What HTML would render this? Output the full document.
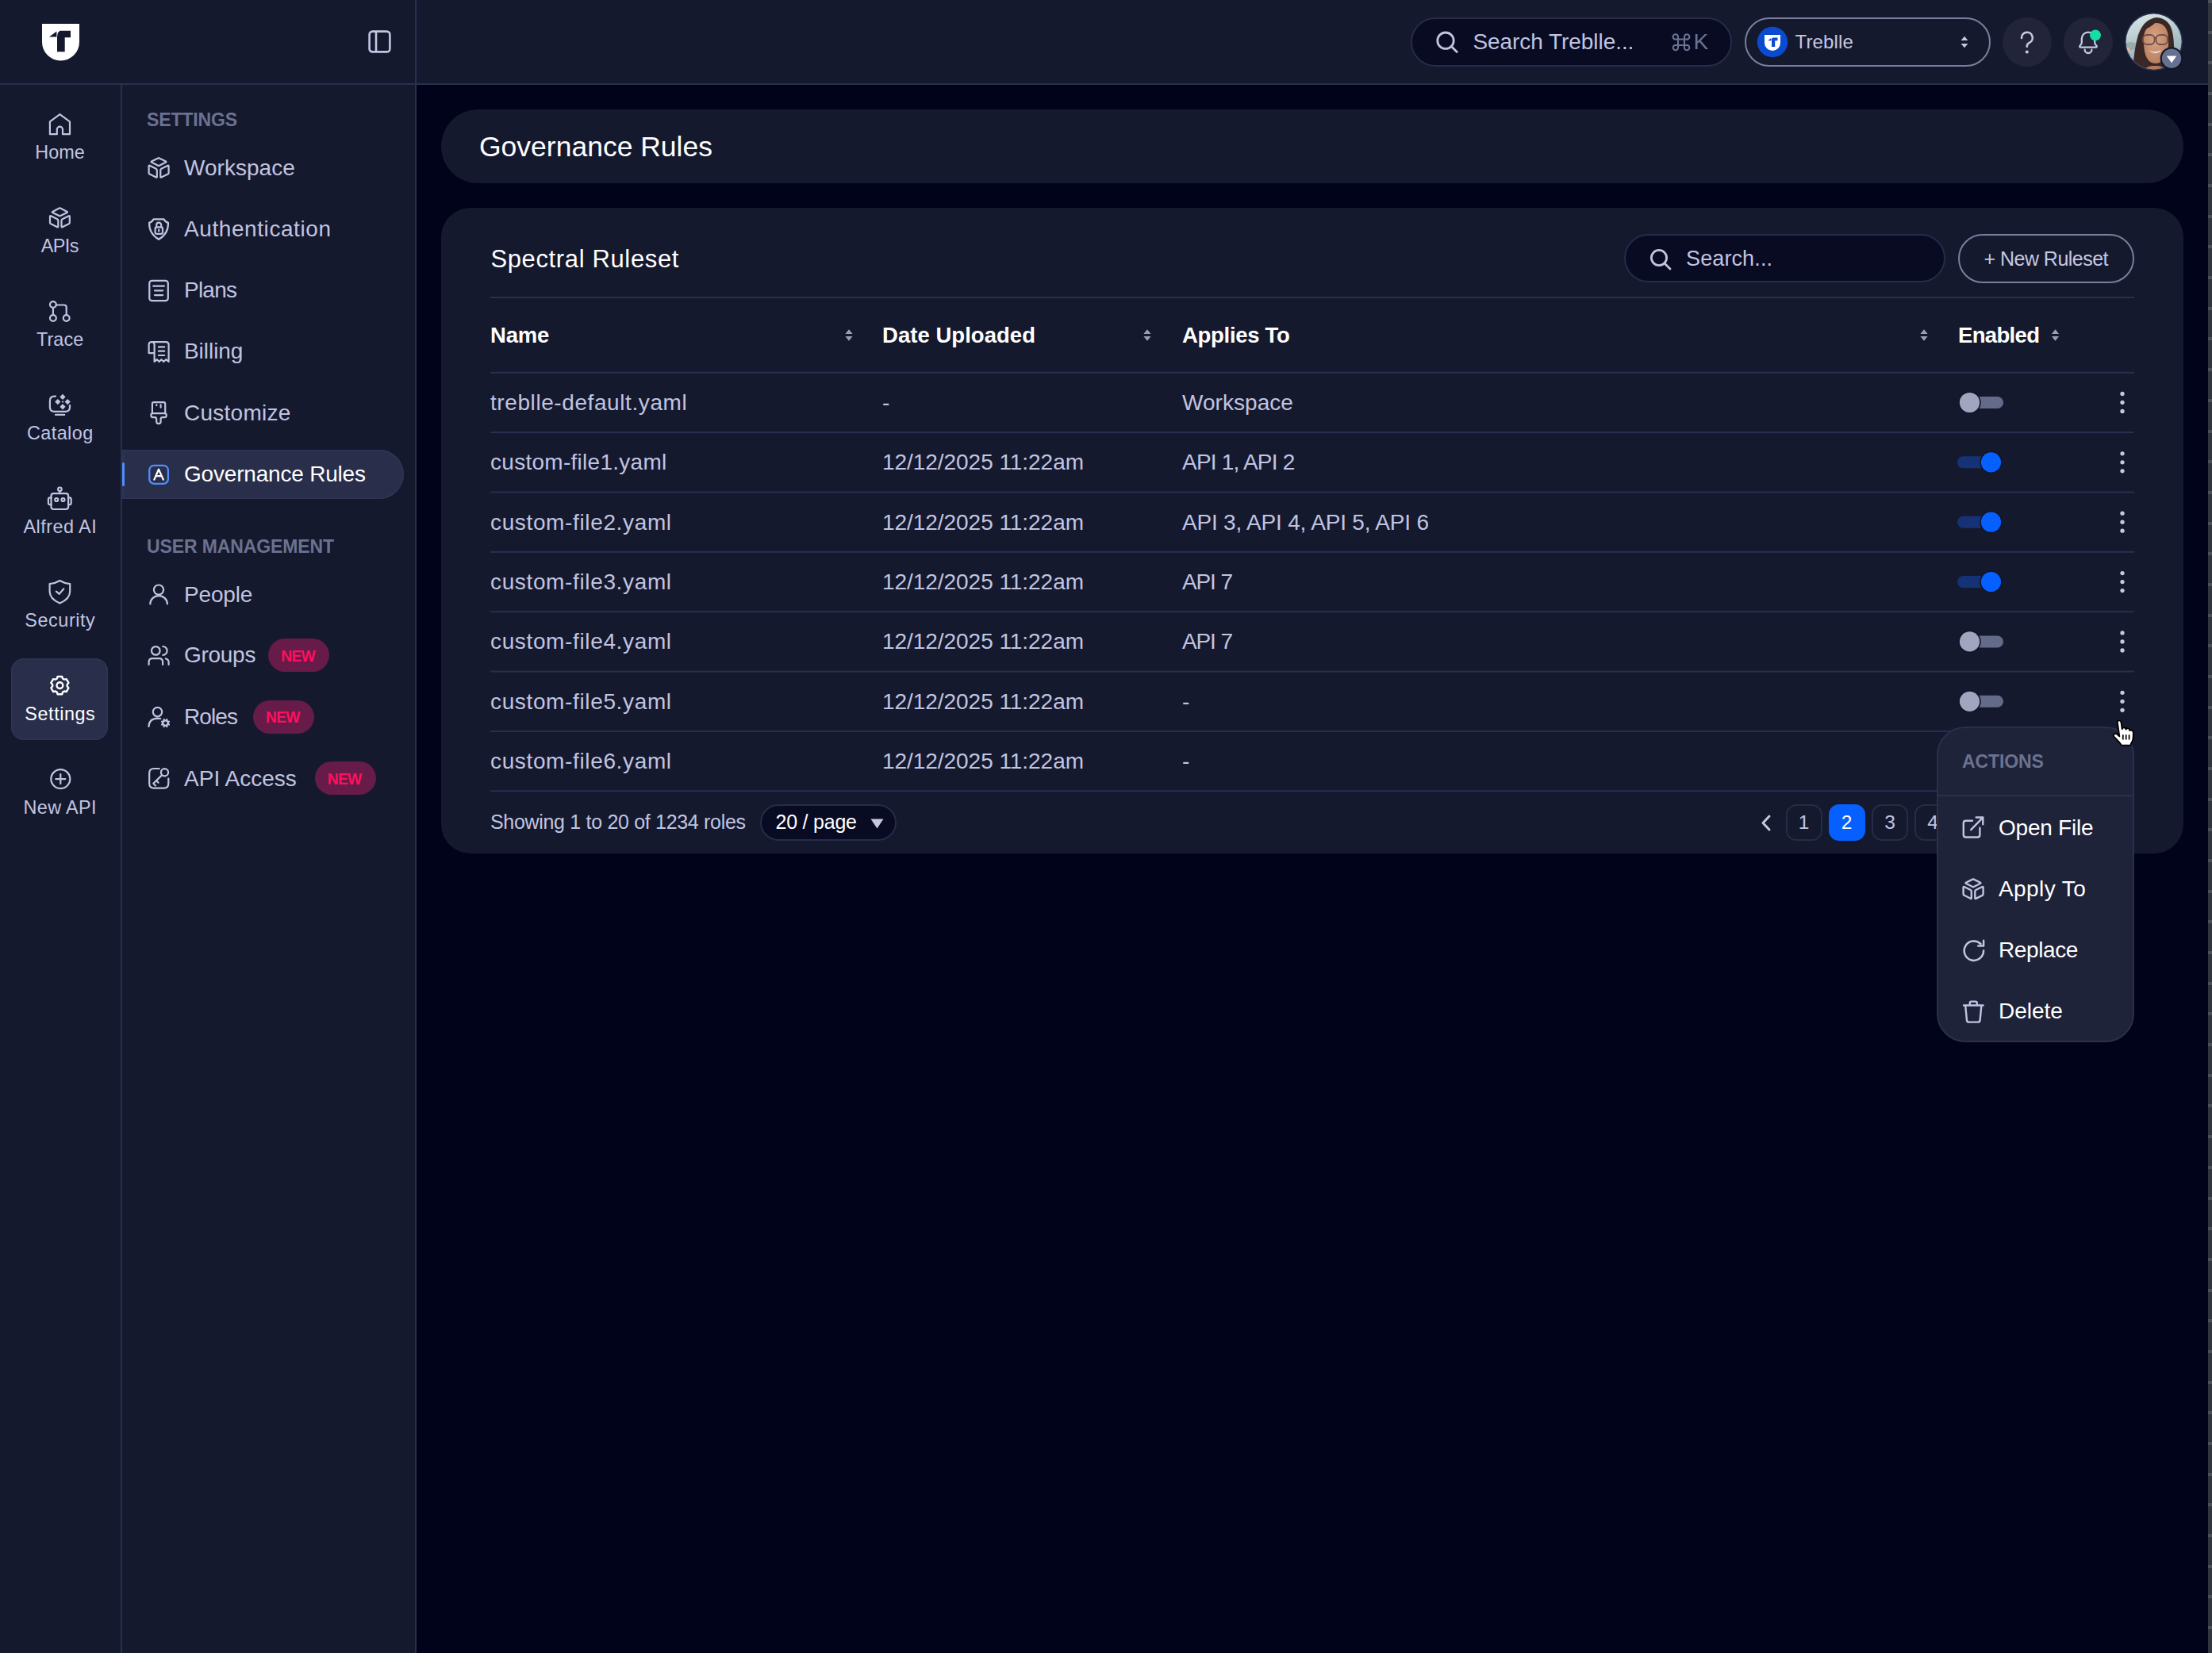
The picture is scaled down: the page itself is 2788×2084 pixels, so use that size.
<!DOCTYPE html>
<html><head><meta charset="utf-8">
<style>
html,body{margin:0;padding:0;}
body{width:2788px;height:2084px;background:#01031a;position:relative;overflow:hidden;font-family:"Liberation Sans",sans-serif;}
.t{position:absolute;white-space:nowrap;}
.b{position:absolute;}
svg.b{overflow:visible;}
</style></head><body>
<div class="b" style="left:0px;top:0px;width:2788px;height:106px;background:#15192e;border-radius:0px;"></div>
<div class="b" style="left:0px;top:106px;width:524px;height:1978px;background:#15192e;border-radius:0px;"></div>
<div class="b" style="left:0px;top:105px;width:2783px;height:2px;background:#283050;border-radius:0px;"></div>
<div class="b" style="left:152px;top:107px;width:2px;height:1977px;background:#283050;border-radius:0px;"></div>
<div class="b" style="left:523px;top:0px;width:2px;height:2084px;background:#283050;border-radius:0px;"></div>
<div class="b" style="left:2783px;top:0;width:5px;height:2084px;background:#31353d;background-image:repeating-linear-gradient(to bottom,#4b4f57 0,#4b4f57 4px,transparent 4px,transparent 38.68px);"></div>
<svg class="b" style="left:52px;top:29px;" width="49" height="49" viewBox="0 0 49 49" fill="none"><path d="M1 1 H48 V24 A23.5 23.5 0 0 1 1 24 Z" fill="#ffffff"/><path d="M10 17.6 L19.4 10.4 V17.6 Z" fill="#15192e"/><path d="M20.8 12.6 L23.4 9.7 H37 V18.2 H29.7 V36.3 H20 V17.6 Z" fill="#15192e"/></svg>
<svg class="b" style="left:463px;top:37px;" width="31" height="31" viewBox="0 0 31 31" fill="none"><rect x="2.6" y="2.6" width="25.8" height="25.8" rx="4" stroke="#c3c6e2" stroke-width="2.6"/><line x1="11" y1="3" x2="11" y2="28" stroke="#c3c6e2" stroke-width="2.6"/></svg>
<div class="b" style="left:14px;top:830px;width:122px;height:103px;background:#292e4a;border-radius:16px;box-shadow:inset 0 0 0 1.5px #2e3453;"></div>
<div class="b" style="left:154px;top:567px;width:355px;height:62px;background:#292e4a;border-radius:0 31px 31px 0;box-shadow:inset 0 0 0 1.5px #2f3555;"></div>
<div class="b" style="left:154px;top:583px;width:3px;height:30px;background:#4e8ffa;border-radius:2px;"></div>
<svg class="b" style="left:0px;top:0px;" width="530" height="1100" viewBox="0 0 530 1100" fill="none"><g transform="translate(50,130)" stroke="#c1c4e0" stroke-width="2.2" stroke-linecap="round" stroke-linejoin="round"><path d="M12.9 23.3 L25.4 14.2 L38 23.3 V39.2 H29 V33.2 A3.6 3.6 0 0 0 21.8 33.2 V39.2 H12.9 Z"/></g><g transform="translate(50,250)" stroke="#c1c4e0" stroke-width="2.2" stroke-linecap="round" stroke-linejoin="round"><path d="M16.2 16.9 L24.6 12.6 Q25.4 12.2 26.2 12.6 L34.6 16.9 Q35.4 17.4 34.6 17.9 L26.2 22.1 Q25.4 22.5 24.6 22.1 L16.2 17.9 Q15.4 17.4 16.2 16.9 Z"/><path d="M13 23 Q13 21.8 14.1 22.3 L22.2 26.3 Q23.3 26.9 23.3 28.1 V35.6 Q23.3 36.8 22.2 36.3 L14.1 32.3 Q13 31.8 13 30.6 Z"/><path d="M37.8 23 Q37.8 21.8 36.7 22.3 L28.6 26.3 Q27.5 26.9 27.5 28.1 V35.6 Q27.5 36.8 28.6 36.3 L36.7 32.3 Q37.8 31.8 37.8 30.6 Z"/></g><g transform="translate(50,368)" stroke="#c1c4e0" stroke-width="2.2" stroke-linecap="round" stroke-linejoin="round"><circle cx="16.9" cy="16" r="3.9"/><circle cx="16.9" cy="33" r="3.9"/><circle cx="33.7" cy="33" r="3.9"/><path d="M16.9 19.9 V29.1"/><path d="M20.8 16.5 H30.7 Q33.7 16.5 33.7 19.5 V29.1"/></g><g transform="translate(50,486)" stroke="#c1c4e0" stroke-width="2.2" stroke-linecap="round" stroke-linejoin="round"><path d="M20 13.6 H18.5 Q12.9 13.6 12.9 19.2 V27.2 Q12.9 32.8 18.5 32.8 H32.4 Q38 32.8 38 27.2 V25"/><path d="M20 36.9 H31.2"/></g><g transform="translate(50,486)" fill="#c1c4e0"><path d="M29 10.8 L32.6 14.4 L29 18 L25.4 14.4 Z"/><path d="M29 23.2 L32.6 26.8 L29 30.4 L25.4 26.8 Z"/><path d="M22.8 17 L26.4 20.6 L22.8 24.2 L19.2 20.6 Z"/><path d="M35.2 17 L38.8 20.6 L35.2 24.2 L31.6 20.6 Z"/><circle cx="29" cy="20.6" r="1.1"/></g><g transform="translate(50,604)" stroke="#c1c4e0" stroke-width="2.2" stroke-linecap="round" stroke-linejoin="round"><rect x="14.5" y="18.1" width="21.6" height="19.9" rx="3"/><path d="M14.5 23.4 H13.2 Q10.9 23.4 10.9 25.7 V29.9 Q10.9 32.2 13.2 32.2 H14.5"/><path d="M36.1 23.4 H37.4 Q39.7 23.4 39.7 25.7 V29.9 Q39.7 32.2 37.4 32.2 H36.1"/><circle cx="25.4" cy="12.8" r="2.3"/><path d="M25.4 15.1 V18.1"/><circle cx="21.2" cy="26" r="2"/><circle cx="29.5" cy="26" r="2"/></g><g transform="translate(50,721)" stroke="#c1c4e0" stroke-width="2.2" stroke-linecap="round" stroke-linejoin="round"><path d="M25.4 11 Q19.5 14.6 12.6 15.2 V24.5 Q12.6 34 25.4 39.6 Q38.2 34 38.2 24.5 V15.2 Q31.3 14.6 25.4 11 Z"/><path d="M20.9 24.6 L24.7 27.9 L30.3 21.3"/></g><g transform="translate(50,957)" stroke="#c1c4e0" stroke-width="2.2" stroke-linecap="round" stroke-linejoin="round"><circle cx="26.3" cy="25.1" r="12"/><path d="M26.3 19.1 V31.1 M20.3 25.1 H32.3"/></g><g transform="translate(176,186)" stroke="#c1c4e0" stroke-width="2.2" stroke-linecap="round" stroke-linejoin="round"><path d="M14.9 17.6 L23.2 13.4 Q24 13 24.8 13.4 L33.1 17.6 Q33.9 18.1 33.1 18.6 L24.8 22.8 Q24 23.2 23.2 22.8 L14.9 18.6 Q14.1 18.1 14.9 17.6 Z"/><path d="M11.6 23.5 Q11.6 22.3 12.7 22.8 L20.7 26.8 Q21.8 27.4 21.8 28.6 V36.9 Q21.8 38.1 20.7 37.6 L12.7 33.6 Q11.6 33.1 11.6 31.9 Z"/><path d="M36.6 23.5 Q36.6 22.3 35.5 22.8 L27.4 26.8 Q26.3 27.4 26.3 28.6 V36.9 Q26.3 38.1 27.4 37.6 L35.5 33.6 Q36.6 33.1 36.6 31.9 Z"/></g><g transform="translate(176,263)" stroke="#c1c4e0" stroke-width="2.2" stroke-linecap="round" stroke-linejoin="round"><path d="M17.6 13.3 H30.5 Q32 16.8 36 17.9 Q36.3 31.5 24 38.8 Q11.7 31.5 12.1 17.9 Q16.1 16.8 17.6 13.3 Z"/><rect x="19.6" y="23.4" width="9.4" height="8.4" rx="2"/><path d="M21.2 23.4 V20.6 A3 3 0 0 1 27.2 20.6 V23.4"/><path d="M24.2 26.6 V28.4"/></g><g transform="translate(176,340)" stroke="#c1c4e0" stroke-width="2.2" stroke-linecap="round" stroke-linejoin="round"><rect x="12.3" y="13.8" width="23.5" height="25.4" rx="3.2"/><path d="M17.2 20.6 H31 M19 26.3 H29.2 M19 32.1 H29.2"/></g><g transform="translate(176,417)" stroke="#c1c4e0" stroke-width="2.2" stroke-linecap="round" stroke-linejoin="round"><path d="M18.6 28.1 H11.6 V17.6 Q11.6 14.1 15.1 14.1 Q18.6 14.1 18.6 17.6 V39 L21.9 36.2 L24.6 39 L27.4 36.2 L30.2 39 L33.2 36.2 L36.6 39 V17.6 Q36.6 14.1 33.1 14.1 H15.1"/><path d="M23.9 20.4 H31.2 M23.9 25.7 H31.2 M23.9 31 H31.2"/></g><g transform="translate(176,494)" stroke="#c1c4e0" stroke-width="2.2" stroke-linecap="round" stroke-linejoin="round"><path d="M15.9 27.1 V15.2 Q15.9 13.2 17.9 13.2 H30.2 Q32.2 13.2 32.2 15.2 V27.1"/><path d="M21.3 16.4 V17.2 M26.6 16.4 V19.7"/><path d="M16.6 27.1 H31.5 Q33.7 27.1 33.7 29.3 V29.8 Q33.7 32.2 31.3 32.2 H28.9 Q26.6 32.2 26.6 34.5 V37.5 A2.7 2.7 0 0 1 21.2 37.5 V34.5 Q21.2 32.2 18.9 32.2 H16.8 Q14.4 32.2 14.4 29.8 V29.3 Q14.4 27.1 16.6 27.1 Z"/></g><g transform="translate(176,573)" stroke-linecap="round" stroke-linejoin="round"><rect x="12.3" y="13.8" width="23.6" height="23.1" rx="6" stroke="#4e8ffa" stroke-width="2.3"/><path d="M18.4 31.6 L24 18.8 L29.8 31.6 M21.9 27.2 H26.3" stroke="#ffffff" stroke-width="2.3"/></g><g transform="translate(176,724)" stroke="#c1c4e0" stroke-width="2.2" stroke-linecap="round" stroke-linejoin="round"><circle cx="24" cy="19.6" r="6.1"/><path d="M13.3 37.5 A10.8 10.4 0 0 1 34.9 37.5"/></g><g transform="translate(176,801)" stroke="#c1c4e0" stroke-width="2.2" stroke-linecap="round" stroke-linejoin="round"><circle cx="20.3" cy="19.4" r="5.3"/><path d="M29.2 14 A5.4 5.4 0 0 1 29.2 24.8"/><path d="M11.6 37 V33.6 Q11.6 29.1 16.1 29.1 H24.6 Q29.1 29.1 29.1 33.6 V37"/><path d="M32.9 29.4 Q36.6 30.6 36.6 34 V37"/></g><g stroke="#ffffff" stroke-width="2.4" stroke-linejoin="round" stroke-linecap="round"><path d="M71.77 855.54 L72.62 852.94 L78.18 852.94 L79.03 855.54 L81.00 856.67 L83.67 856.11 L86.45 860.93 L84.63 862.97 L84.63 865.23 L86.45 867.27 L83.67 872.09 L81.00 871.53 L79.03 872.66 L78.18 875.26 L72.62 875.26 L71.77 872.66 L69.80 871.53 L67.13 872.09 L64.35 867.27 L66.17 865.23 L66.17 862.97 L64.35 860.93 L67.13 856.11 L69.80 856.67 Z"/><circle cx="75.4" cy="864.1" r="3.9"/></g><g transform="translate(176,878)" stroke="#c1c4e0" stroke-width="2.2" stroke-linecap="round" stroke-linejoin="round"><circle cx="22.5" cy="19.6" r="5.7"/><path d="M11.5 38 Q11.8 28 22.5 27.6 Q24.6 27.6 26.2 28"/><path d="M33.09 29.14 L33.88 27.86 L35.58 28.57 L35.24 30.03 L36.07 30.86 L37.53 30.52 L38.24 32.22 L36.96 33.01 L36.96 34.19 L38.24 34.98 L37.53 36.68 L36.07 36.34 L35.24 37.17 L35.58 38.63 L33.88 39.34 L33.09 38.06 L31.91 38.06 L31.12 39.34 L29.42 38.63 L29.76 37.17 L28.93 36.34 L27.47 36.68 L26.76 34.98 L28.04 34.19 L28.04 33.01 L26.76 32.22 L27.47 30.52 L28.93 30.86 L29.76 30.03 L29.42 28.57 L31.12 27.86 L31.91 29.14 Z M34.6 33.6 A2.1 2.1 0 1 0 30.4 33.6 A2.1 2.1 0 1 0 34.6 33.6 Z" stroke="none" fill="#c1c4e0" fill-rule="evenodd"/></g><g transform="translate(176,955)" stroke="#c1c4e0" stroke-width="2.2" stroke-linecap="round" stroke-linejoin="round"><path d="M24.8 14 H18 Q12.2 14 12.2 19.8 V32.8 Q12.2 38.6 18 38.6 H30.5 Q36.3 38.6 36.3 32.8 V26.6"/><circle cx="31.5" cy="18.8" r="4.6"/><path d="M28.2 22.1 L17.3 32.8 M17.3 32.8 L20 35.5 M21 29.1 L23.6 31.7"/></g></svg>
<div class="t" style="left:44.30px;top:181.39px;font-size:23.4px;line-height:23.4px;color:#c1c4e0;letter-spacing:0.060px;">Home</div>
<div class="t" style="left:51.75px;top:299.19px;font-size:23.4px;line-height:23.4px;color:#c1c4e0;letter-spacing:-0.573px;">APIs</div>
<div class="t" style="left:45.90px;top:416.99px;font-size:23.4px;line-height:23.4px;color:#c1c4e0;letter-spacing:0.113px;">Trace</div>
<div class="t" style="left:33.95px;top:535.19px;font-size:23.4px;line-height:23.4px;color:#c1c4e0;letter-spacing:0.441px;">Catalog</div>
<div class="t" style="left:29.45px;top:653.19px;font-size:23.4px;line-height:23.4px;color:#c1c4e0;letter-spacing:0.481px;">Alfred AI</div>
<div class="t" style="left:31.35px;top:771.19px;font-size:23.4px;line-height:23.4px;color:#c1c4e0;letter-spacing:0.567px;">Security</div>
<div class="t" style="left:31.35px;top:888.89px;font-size:23.4px;line-height:23.4px;color:#ffffff;letter-spacing:0.564px;">Settings</div>
<div class="t" style="left:29.60px;top:1007.19px;font-size:23.4px;line-height:23.4px;color:#c1c4e0;letter-spacing:0.377px;">New API</div>
<div class="t" style="left:185px;top:140.33px;font-size:23px;line-height:23px;color:#6b7290;font-weight:bold;letter-spacing:-0.145px;">SETTINGS</div>
<div class="t" style="left:232px;top:197.80px;font-size:28px;line-height:28px;color:#c1c4e0;font-weight:normal;letter-spacing:0.033px;">Workspace</div>
<div class="t" style="left:232px;top:275.30px;font-size:28px;line-height:28px;color:#c1c4e0;font-weight:normal;letter-spacing:0.58px;">Authentication</div>
<div class="t" style="left:232px;top:352.30px;font-size:28px;line-height:28px;color:#c1c4e0;font-weight:normal;letter-spacing:-0.761px;">Plans</div>
<div class="t" style="left:232px;top:429.30px;font-size:28px;line-height:28px;color:#c1c4e0;font-weight:normal;letter-spacing:-0.051px;">Billing</div>
<div class="t" style="left:232px;top:506.90px;font-size:28px;line-height:28px;color:#c1c4e0;font-weight:normal;letter-spacing:0.254px;">Customize</div>
<div class="t" style="left:232px;top:583.80px;font-size:28px;line-height:28px;color:#ffffff;font-weight:normal;letter-spacing:-0.194px;">Governance Rules</div>
<div class="t" style="left:185px;top:678.03px;font-size:23px;line-height:23px;color:#6b7290;font-weight:bold;letter-spacing:-0.12px;">USER MANAGEMENT</div>
<div class="t" style="left:232px;top:735.70px;font-size:28px;line-height:28px;color:#c1c4e0;font-weight:normal;letter-spacing:-0.178px;">People</div>
<div class="t" style="left:232px;top:812.30px;font-size:28px;line-height:28px;color:#c1c4e0;font-weight:normal;letter-spacing:-0.284px;">Groups</div>
<div class="t" style="left:232px;top:890.30px;font-size:28px;line-height:28px;color:#c1c4e0;font-weight:normal;letter-spacing:-0.922px;">Roles</div>
<div class="t" style="left:232px;top:968.30px;font-size:28px;line-height:28px;color:#c1c4e0;font-weight:normal;letter-spacing:0.02px;">API Access</div>
<div class="b" style="left:338px;top:805px;width:77px;height:42px;border-radius:21px;background:#661b48;"></div>
<div class="t" style="left:354.20px;top:817.66px;font-size:19.3px;line-height:19.3px;color:#ff0f5f;font-weight:bold;letter-spacing:-0.714px;">NEW</div>
<div class="b" style="left:318.8px;top:882.5px;width:77px;height:42px;border-radius:21px;background:#661b48;"></div>
<div class="t" style="left:335.00px;top:895.16px;font-size:19.3px;line-height:19.3px;color:#ff0f5f;font-weight:bold;letter-spacing:-0.714px;">NEW</div>
<div class="b" style="left:396.5px;top:960px;width:77px;height:42px;border-radius:21px;background:#661b48;"></div>
<div class="t" style="left:412.70px;top:972.66px;font-size:19.3px;line-height:19.3px;color:#ff0f5f;font-weight:bold;letter-spacing:-0.714px;">NEW</div>
<div class="b" style="left:556px;top:138px;width:2196px;height:93px;background:#15192e;border-radius:46.5px;"></div>
<div class="t" style="left:604px;top:168.35px;font-size:35.5px;line-height:35.5px;color:#ffffff;font-weight:normal;letter-spacing:-0.002px;">Governance Rules</div>
<div class="b" style="left:556px;top:262px;width:2196px;height:814px;background:#15192e;border-radius:37px;"></div>
<div class="t" style="left:618.4px;top:310.76px;font-size:31px;line-height:31px;color:#ffffff;font-weight:normal;letter-spacing:0.637px;">Spectral Ruleset</div>
<div class="b" style="left:2047px;top:295px;width:405px;height:61px;box-sizing:border-box;border:2px solid #262c48;border-radius:31px;background:#080b22;"></div>
<div class="t" style="left:2125px;top:313.14px;font-size:27px;line-height:27px;color:#c1c4e0;font-weight:normal;letter-spacing:0.118px;">Search...</div>
<div class="b" style="left:2468px;top:295px;width:222px;height:62px;box-sizing:border-box;border:2px solid #7a7f9e;border-radius:31px;"></div>
<div class="t" style="left:2500.5px;top:313.74px;font-size:25px;line-height:25px;color:#c5c8e0;font-weight:normal;letter-spacing:-0.523px;">+ New Ruleset</div>
<div class="b" style="left:618px;top:374px;width:2072px;height:2px;background:#283050;border-radius:0px;"></div>
<svg class="b" style="left:0px;top:0px;" width="2788" height="1100" viewBox="0 0 2788 1100" fill="none"><rect x="618" y="468.80" width="2072" height="2" fill="#283050"/><rect x="618" y="544.16" width="2072" height="2" fill="#283050"/><rect x="618" y="619.52" width="2072" height="2" fill="#283050"/><rect x="618" y="694.88" width="2072" height="2" fill="#283050"/><rect x="618" y="770.24" width="2072" height="2" fill="#283050"/><rect x="618" y="845.60" width="2072" height="2" fill="#283050"/><rect x="618" y="920.96" width="2072" height="2" fill="#283050"/><rect x="618" y="996.32" width="2072" height="2" fill="#283050"/></svg>
<div class="t" style="left:618px;top:409.12px;font-size:27.5px;line-height:27.5px;color:#ffffff;font-weight:bold;letter-spacing:-0.167px;">Name</div>
<div class="t" style="left:1112px;top:409.12px;font-size:27.5px;line-height:27.5px;color:#ffffff;font-weight:bold;letter-spacing:0.039px;">Date Uploaded</div>
<div class="t" style="left:1490px;top:409.12px;font-size:27.5px;line-height:27.5px;color:#ffffff;font-weight:bold;letter-spacing:-0.303px;">Applies To</div>
<div class="t" style="left:2468px;top:409.12px;font-size:27.5px;line-height:27.5px;color:#ffffff;font-weight:bold;letter-spacing:-0.661px;">Enabled</div>
<div class="t" style="left:618px;top:494.00px;font-size:28px;line-height:28px;color:#c1c4e0;font-weight:normal;letter-spacing:0.586px;">treblle-default.yaml</div>
<div class="t" style="left:1112px;top:494.00px;font-size:28px;line-height:28px;color:#c1c4e0;font-weight:normal;">-</div>
<div class="t" style="left:1490px;top:494.00px;font-size:28px;line-height:28px;color:#c1c4e0;font-weight:normal;letter-spacing:0.045px;">Workspace</div>
<div class="t" style="left:618px;top:569.36px;font-size:28px;line-height:28px;color:#c1c4e0;font-weight:normal;letter-spacing:0.279px;">custom-file1.yaml</div>
<div class="t" style="left:1112px;top:569.36px;font-size:28px;line-height:28px;color:#c1c4e0;font-weight:normal;letter-spacing:-0.048px;">12/12/2025 11:22am</div>
<div class="t" style="left:1490px;top:569.36px;font-size:28px;line-height:28px;color:#c1c4e0;font-weight:normal;letter-spacing:-0.789px;">API 1, API 2</div>
<div class="t" style="left:618px;top:644.72px;font-size:28px;line-height:28px;color:#c1c4e0;font-weight:normal;letter-spacing:0.64px;">custom-file2.yaml</div>
<div class="t" style="left:1112px;top:644.72px;font-size:28px;line-height:28px;color:#c1c4e0;font-weight:normal;letter-spacing:-0.048px;">12/12/2025 11:22am</div>
<div class="t" style="left:1490px;top:644.72px;font-size:28px;line-height:28px;color:#c1c4e0;font-weight:normal;letter-spacing:-0.199px;">API 3, API 4, API 5, API 6</div>
<div class="t" style="left:618px;top:720.08px;font-size:28px;line-height:28px;color:#c1c4e0;font-weight:normal;letter-spacing:0.64px;">custom-file3.yaml</div>
<div class="t" style="left:1112px;top:720.08px;font-size:28px;line-height:28px;color:#c1c4e0;font-weight:normal;letter-spacing:-0.048px;">12/12/2025 11:22am</div>
<div class="t" style="left:1490px;top:720.08px;font-size:28px;line-height:28px;color:#c1c4e0;font-weight:normal;letter-spacing:-1.121px;">API 7</div>
<div class="t" style="left:618px;top:795.44px;font-size:28px;line-height:28px;color:#c1c4e0;font-weight:normal;letter-spacing:0.64px;">custom-file4.yaml</div>
<div class="t" style="left:1112px;top:795.44px;font-size:28px;line-height:28px;color:#c1c4e0;font-weight:normal;letter-spacing:-0.048px;">12/12/2025 11:22am</div>
<div class="t" style="left:1490px;top:795.44px;font-size:28px;line-height:28px;color:#c1c4e0;font-weight:normal;letter-spacing:-1.121px;">API 7</div>
<div class="t" style="left:618px;top:870.80px;font-size:28px;line-height:28px;color:#c1c4e0;font-weight:normal;letter-spacing:0.64px;">custom-file5.yaml</div>
<div class="t" style="left:1112px;top:870.80px;font-size:28px;line-height:28px;color:#c1c4e0;font-weight:normal;letter-spacing:-0.048px;">12/12/2025 11:22am</div>
<div class="t" style="left:1490px;top:870.80px;font-size:28px;line-height:28px;color:#c1c4e0;font-weight:normal;">-</div>
<div class="t" style="left:618px;top:946.16px;font-size:28px;line-height:28px;color:#c1c4e0;font-weight:normal;letter-spacing:0.64px;">custom-file6.yaml</div>
<div class="t" style="left:1112px;top:946.16px;font-size:28px;line-height:28px;color:#c1c4e0;font-weight:normal;letter-spacing:-0.048px;">12/12/2025 11:22am</div>
<div class="t" style="left:1490px;top:946.16px;font-size:28px;line-height:28px;color:#c1c4e0;font-weight:normal;">-</div>
<svg class="b" style="left:0px;top:0px;" width="2788" height="1100" viewBox="0 0 2788 1100" fill="none"><path d="M1065.4 421.1 L1070 415.3 L1074.6 421.1 Z M1065.4 423.9 L1070 429.7 L1074.6 423.9 Z" fill="#9a9ebb"/><path d="M1441.4 421.1 L1446 415.3 L1450.6 421.1 Z M1441.4 423.9 L1446 429.7 L1450.6 423.9 Z" fill="#9a9ebb"/><path d="M2420.4 421.1 L2425 415.3 L2429.6 421.1 Z M2420.4 423.9 L2425 429.7 L2429.6 423.9 Z" fill="#9a9ebb"/><path d="M2585.9 421.1 L2590.5 415.3 L2595.1 421.1 Z M2585.9 423.9 L2590.5 429.7 L2595.1 423.9 Z" fill="#9a9ebb"/><rect x="2470" y="500.0" width="55" height="15" rx="7.5" fill="#646b88"/><circle cx="2482.5" cy="507.5" r="14.2" fill="#111526"/><circle cx="2482.5" cy="507.5" r="12.6" fill="#a2a5c0"/><circle cx="2675" cy="496.5" r="2.65" fill="#c5c8e0"/><circle cx="2675" cy="507.5" r="2.65" fill="#c5c8e0"/><circle cx="2675" cy="518.5" r="2.65" fill="#c5c8e0"/><rect x="2467" y="575.36" width="56" height="15" rx="7.5" fill="#163276"/><circle cx="2509.5" cy="582.86" r="14.2" fill="#111526"/><circle cx="2509.5" cy="582.86" r="12.6" fill="#0560ff"/><circle cx="2675" cy="571.86" r="2.65" fill="#c5c8e0"/><circle cx="2675" cy="582.86" r="2.65" fill="#c5c8e0"/><circle cx="2675" cy="593.86" r="2.65" fill="#c5c8e0"/><rect x="2467" y="650.72" width="56" height="15" rx="7.5" fill="#163276"/><circle cx="2509.5" cy="658.22" r="14.2" fill="#111526"/><circle cx="2509.5" cy="658.22" r="12.6" fill="#0560ff"/><circle cx="2675" cy="647.22" r="2.65" fill="#c5c8e0"/><circle cx="2675" cy="658.22" r="2.65" fill="#c5c8e0"/><circle cx="2675" cy="669.22" r="2.65" fill="#c5c8e0"/><rect x="2467" y="726.08" width="56" height="15" rx="7.5" fill="#163276"/><circle cx="2509.5" cy="733.58" r="14.2" fill="#111526"/><circle cx="2509.5" cy="733.58" r="12.6" fill="#0560ff"/><circle cx="2675" cy="722.58" r="2.65" fill="#c5c8e0"/><circle cx="2675" cy="733.58" r="2.65" fill="#c5c8e0"/><circle cx="2675" cy="744.58" r="2.65" fill="#c5c8e0"/><rect x="2470" y="801.44" width="55" height="15" rx="7.5" fill="#646b88"/><circle cx="2482.5" cy="808.94" r="14.2" fill="#111526"/><circle cx="2482.5" cy="808.94" r="12.6" fill="#a2a5c0"/><circle cx="2675" cy="797.94" r="2.65" fill="#c5c8e0"/><circle cx="2675" cy="808.94" r="2.65" fill="#c5c8e0"/><circle cx="2675" cy="819.94" r="2.65" fill="#c5c8e0"/><rect x="2470" y="876.8000000000001" width="55" height="15" rx="7.5" fill="#646b88"/><circle cx="2482.5" cy="884.3000000000001" r="14.2" fill="#111526"/><circle cx="2482.5" cy="884.3000000000001" r="12.6" fill="#a2a5c0"/><circle cx="2675" cy="873.3000000000001" r="2.65" fill="#c5c8e0"/><circle cx="2675" cy="884.3000000000001" r="2.65" fill="#c5c8e0"/><circle cx="2675" cy="895.3000000000001" r="2.65" fill="#c5c8e0"/></svg>
<div class="t" style="left:618px;top:1024.24px;font-size:25px;line-height:25px;color:#c1c4e0;font-weight:normal;letter-spacing:-0.314px;">Showing 1 to 20 of 1234 roles</div>
<div class="b" style="left:958px;top:1014px;width:172px;height:46px;box-sizing:border-box;border:2px solid #262c48;border-radius:23px;background:#080b22;"></div>
<div class="t" style="left:977.5px;top:1023.84px;font-size:25px;line-height:25px;color:#ffffff;font-weight:normal;letter-spacing:-0.22px;">20 / page</div>
<svg class="b" style="left:1096px;top:1031px;" width="20" height="15" viewBox="0 0 20 15" fill="none"><path d="M1.5 1.5 H17.5 L9.5 13.5 Z" fill="#c5c8e0"/></svg>
<svg class="b" style="left:2210px;top:1020px;" width="30" height="34" viewBox="0 0 30 34" fill="none"><path d="M20 9 L12 17.5 L20 26" stroke="#c5c8e0" stroke-width="3" stroke-linecap="round" stroke-linejoin="round"/></svg>
<div class="b" style="left:2250.5px;top:1014px;width:46px;height:46px;box-sizing:border-box;border:2px solid #262c48;border-radius:13px;"></div>
<div class="t" style="left:2250.5px;width:46px;text-align:center;top:1024.76px;font-size:24.5px;line-height:24.5px;color:#c1c4e0;">1</div>
<div class="b" style="left:2304.5px;top:1014px;width:46px;height:46px;border-radius:13px;background:#0560ff;"></div>
<div class="t" style="left:2304.5px;width:46px;text-align:center;top:1024.76px;font-size:24.5px;line-height:24.5px;color:#ffffff;">2</div>
<div class="b" style="left:2359px;top:1014px;width:46px;height:46px;box-sizing:border-box;border:2px solid #262c48;border-radius:13px;"></div>
<div class="t" style="left:2359px;width:46px;text-align:center;top:1024.76px;font-size:24.5px;line-height:24.5px;color:#c1c4e0;">3</div>
<div class="b" style="left:2413px;top:1014px;width:46px;height:46px;box-sizing:border-box;border:2px solid #262c48;border-radius:13px;"></div>
<div class="t" style="left:2413px;width:46px;text-align:center;top:1024.76px;font-size:24.5px;line-height:24.5px;color:#c1c4e0;">4</div>
<svg class="b" style="left:2070px;top:305px;" width="44" height="44" viewBox="0 0 44 44" fill="none"><circle cx="21" cy="20" r="9.6" stroke="#c1c4e0" stroke-width="2.8"/><path d="M28 27 L35 34" stroke="#c1c4e0" stroke-width="2.8" stroke-linecap="round"/></svg>
<div class="b" style="left:1778px;top:22px;width:405px;height:62px;box-sizing:border-box;border:2px solid #262c48;border-radius:31px;background:#080b22;"></div>
<svg class="b" style="left:1800px;top:30px;" width="44" height="44" viewBox="0 0 44 44" fill="none"><circle cx="22" cy="21.2" r="10.2" stroke="#c1c4e0" stroke-width="2.8"/><path d="M29.3 28.5 L36.3 35.5" stroke="#c1c4e0" stroke-width="2.8" stroke-linecap="round"/></svg>
<div class="t" style="left:1856.4px;top:39.00px;font-size:28px;line-height:28px;color:#c1c4e0;font-weight:normal;letter-spacing:-0.055px;">Search Treblle...</div>
<svg class="b" style="left:2106px;top:40px;" width="30" height="26" viewBox="0 0 30 26" fill="none"><g stroke="#6b7394" stroke-width="2.1" fill="none"><path d="M9 9.5 H17 M9 17 H17 M9 9.5 V17 M17 9.5 V17"/><path d="M9 9.5 H6.8 A3.2 3.2 0 1 1 9 6.8 Z"/><path d="M17 9.5 V6.8 A3.2 3.2 0 1 1 19.2 9.5 Z"/><path d="M9 17 V19.2 A3.2 3.2 0 1 1 6.8 17 Z"/><path d="M17 17 H19.2 A3.2 3.2 0 1 1 17 19.2 Z"/></g></svg>
<div class="t" style="left:2134.5px;top:39.00px;font-size:28px;line-height:28px;color:#6b7394;font-weight:normal;">K</div>
<div class="b" style="left:2199px;top:22px;width:310px;height:62px;box-sizing:border-box;border:2px solid #7a7f9e;border-radius:31px;"></div>
<svg class="b" style="left:2214px;top:33px;" width="40" height="40" viewBox="0 0 40 40" fill="none"><circle cx="20" cy="20" r="19.2" fill="#0b4bd0"/><path d="M10 11 H30 V21 A10 10 0 0 1 10 21 Z" fill="#ffffff"/><path d="M14.2 18.3 L18.4 15.1 V18.3 Z" fill="#0b4bd0"/><path d="M19 16 L20.4 14.4 H26.5 V18.2 H23.2 V26 H19 V18.2 Z" fill="#0b4bd0"/></svg>
<div class="t" style="left:2262.5px;top:40.68px;font-size:24px;line-height:24px;color:#c5c8e0;font-weight:normal;letter-spacing:0.155px;">Treblle</div>
<svg class="b" style="left:2466px;top:40px;" width="20" height="26" viewBox="0 0 20 26" fill="none"><path d="M5.6 11 L10 5.7 L14.4 11 Z M5.6 15 L10 20.3 L14.4 15 Z" fill="#c5c8e0"/></svg>
<div class="b" style="left:2524px;top:22px;width:62px;height:62px;background:#222539;border-radius:31px;"></div>
<div class="b" style="left:2601px;top:22px;width:62px;height:62px;background:#222539;border-radius:31px;"></div>
<svg class="b" style="left:2524px;top:22px;" width="62" height="62" viewBox="0 0 62 62" fill="none"><path d="M24 26 A6.9 6.9 0 1 1 33.8 31.9 Q30.8 33.4 30.8 36.2 V36.8" stroke="#c5c8e0" stroke-width="2.6" stroke-linecap="round" fill="none"/><circle cx="30.8" cy="43.6" r="2" fill="#c5c8e0"/></svg>
<svg class="b" style="left:2601px;top:22px;" width="62" height="62" viewBox="0 0 62 62" fill="none"><path d="M31 18.6 A8.2 8.2 0 0 0 22.8 26.8 V31.2 Q22.8 34.2 20.6 35.6 Q19.6 37.6 21.4 37.6 H40.6 Q42.4 37.6 41.4 35.6 Q39.2 34.2 39.2 31.2 V26.8 A8.2 8.2 0 0 0 31 18.6 Z" stroke="#c5c8e0" stroke-width="2.3" fill="none" stroke-linejoin="round"/><path d="M26.6 40.6 A4.4 4.4 0 0 0 35.4 40.6" stroke="#c5c8e0" stroke-width="2.3" fill="none" stroke-linecap="round"/><circle cx="40" cy="22.3" r="6.9" fill="#14dfa2"/></svg>
<svg class="b" style="left:2676px;top:14px;" width="80" height="80" viewBox="0 0 80 80" fill="none"><defs><clipPath id="av"><circle cx="38.6" cy="38.5" r="35"/></clipPath><linearGradient id="avbg" x1="0" y1="0" x2="0.3" y2="1"><stop offset="0" stop-color="#e2eef0"/><stop offset="0.5" stop-color="#b4c9cc"/><stop offset="1" stop-color="#8ea3a8"/></linearGradient><radialGradient id="face" cx="0.45" cy="0.4" r="0.6"><stop offset="0" stop-color="#d9a585"/><stop offset="1" stop-color="#b9805f"/></radialGradient></defs><circle cx="38.6" cy="38.5" r="36.4" fill="#2b3556"/><g clip-path="url(#av)"><rect x="0" y="0" width="80" height="80" fill="url(#avbg)"/><ellipse cx="10" cy="44" rx="8" ry="5" fill="#7f9096" opacity="0.5"/><circle cx="6" cy="48" r="2.2" fill="#f4b690"/><path d="M12 80 Q13 50 19 30 Q26 10 42 8 Q58 9 62 26 Q65 40 64 60 L66 80 Z" fill="#3a2826"/><path d="M26 38 Q25 16 41 15 Q57 15 57 36 Q58 56 48 64 Q41 68 34 64 Q26 58 26 38 Z" fill="url(#face)"/><path d="M22 80 Q28 68 40 69 Q52 68 58 80 Z" fill="#b47a5e"/><path d="M25 30 Q28 14 42 13 Q38 18 30 22 Q27 25 25 32 Z" fill="#3a2826"/><g stroke="#6e5050" stroke-width="1.9" fill="none"><rect x="25" y="30" width="14.5" height="12" rx="5"/><rect x="41.5" y="30" width="14.5" height="12" rx="5"/><path d="M39.5 33.5 H41.5"/></g><path d="M32 48.5 Q40 53.5 48.5 48 Q47 53 40 53.5 Q34 53 32 48.5 Z" fill="#f7f1ee" stroke="#c8877a" stroke-width="1"/></g><circle cx="61" cy="59.7" r="14.3" fill="#111526"/><circle cx="61" cy="59.7" r="12.2" fill="#667091"/><path d="M54.8 56.6 H67.4 L61.1 65.3 Z" fill="#ffffff"/></svg>
<div class="b" style="left:2441px;top:916px;width:249px;height:398px;box-sizing:border-box;border:2px solid #2a2f4d;border-radius:36px;background:#1f2339;"></div>
<div class="t" style="left:2473px;top:948.53px;font-size:23px;line-height:23px;color:#6b7290;font-weight:bold;letter-spacing:-0.117px;">ACTIONS</div>
<div class="b" style="left:2443px;top:1002px;width:245px;height:2px;background:#2a2f4d;border-radius:0px;"></div>
<div class="t" style="left:2519px;top:1029.50px;font-size:28px;line-height:28px;color:#ffffff;font-weight:normal;letter-spacing:-0.237px;">Open File</div>
<div class="t" style="left:2519px;top:1107.30px;font-size:28px;line-height:28px;color:#ffffff;font-weight:normal;letter-spacing:0.416px;">Apply To</div>
<div class="t" style="left:2519px;top:1183.80px;font-size:28px;line-height:28px;color:#ffffff;font-weight:normal;letter-spacing:-0.389px;">Replace</div>
<div class="t" style="left:2519px;top:1260.90px;font-size:28px;line-height:28px;color:#ffffff;font-weight:normal;letter-spacing:-0.028px;">Delete</div>
<svg class="b" style="left:0px;top:0px;" width="2788" height="1400" viewBox="0 0 2788 1400" fill="none"><g transform="translate(2460,1018)" stroke="#c1c4e0" stroke-width="2.4" stroke-linecap="round" stroke-linejoin="round"><path d="M26 16.8 H17.8 Q14.8 16.8 14.8 19.8 V34.5 Q14.8 37.5 17.8 37.5 H32.4 Q35.4 37.5 35.4 34.5 V25.7"/><path d="M24.2 28.1 L39.3 12.6 M30.7 12.5 H39.3 V21.2"/></g><g transform="translate(2463,1095.2)" stroke="#c1c4e0" stroke-width="2.4" stroke-linecap="round" stroke-linejoin="round"><path d="M14.9 17.6 L23.2 13.4 Q24 13 24.8 13.4 L33.1 17.6 Q33.9 18.1 33.1 18.6 L24.8 22.8 Q24 23.2 23.2 22.8 L14.9 18.6 Q14.1 18.1 14.9 17.6 Z"/><path d="M11.6 23.5 Q11.6 22.3 12.7 22.8 L20.7 26.8 Q21.8 27.4 21.8 28.6 V36.9 Q21.8 38.1 20.7 37.6 L12.7 33.6 Q11.6 33.1 11.6 31.9 Z"/><path d="M36.6 23.5 Q36.6 22.3 35.5 22.8 L27.4 26.8 Q26.3 27.4 26.3 28.6 V36.9 Q26.3 38.1 27.4 37.6 L35.5 33.6 Q36.6 33.1 36.6 31.9 Z"/></g><g transform="translate(2461.5,1173)" stroke="#c1c4e0" stroke-width="2.5" stroke-linecap="round" stroke-linejoin="round"><path d="M38.6 25.6 A12.2 12.2 0 1 1 35 17"/><path d="M38.6 12.8 V19.6 H31.8"/></g><g transform="translate(2461,1250)" stroke="#c1c4e0" stroke-width="2.4" stroke-linecap="round" stroke-linejoin="round"><path d="M14 17.5 H38.6 M16.2 17.5 L18 36.5 Q18.3 38.6 20.4 38.6 H32.2 Q34.3 38.6 34.6 36.5 L36.4 17.5 M21.8 17.5 V14.5 Q21.8 12.6 23.7 12.6 H28.9 Q30.8 12.6 30.8 14.5 V17.5"/></g></svg>
<svg class="b" style="left:2656px;top:904px;" width="40" height="40" viewBox="0 0 40 40" fill="none"><path d="M12.8 6.8 Q12.9 4.2 15.2 4.4 Q17.3 4.7 17.6 7.2 L18.7 15.2 Q19.3 13 21.4 13.2 Q23.2 13.5 23.5 15.6 Q24.4 14 26.4 14.4 Q28.1 14.9 28.3 17 Q29.6 16 31.3 16.9 Q33 17.9 32.9 20.6 L32.5 27.8 Q31.8 31.3 30 33.3 L29.6 35.6 H17.8 Q16.6 33.4 14.5 31.2 L8.4 24.6 Q7 22.7 8.7 21.4 Q10.5 20.1 12.5 21.7 L15.3 24.3 Z" fill="#ffffff" stroke="#000000" stroke-width="1.9" stroke-linejoin="round"/><path d="M19.8 22.3 V28.6 M23.7 22.3 V28.6 M27.6 22.3 V28.6" stroke="#000000" stroke-width="1.7"/></svg>

</body></html>
